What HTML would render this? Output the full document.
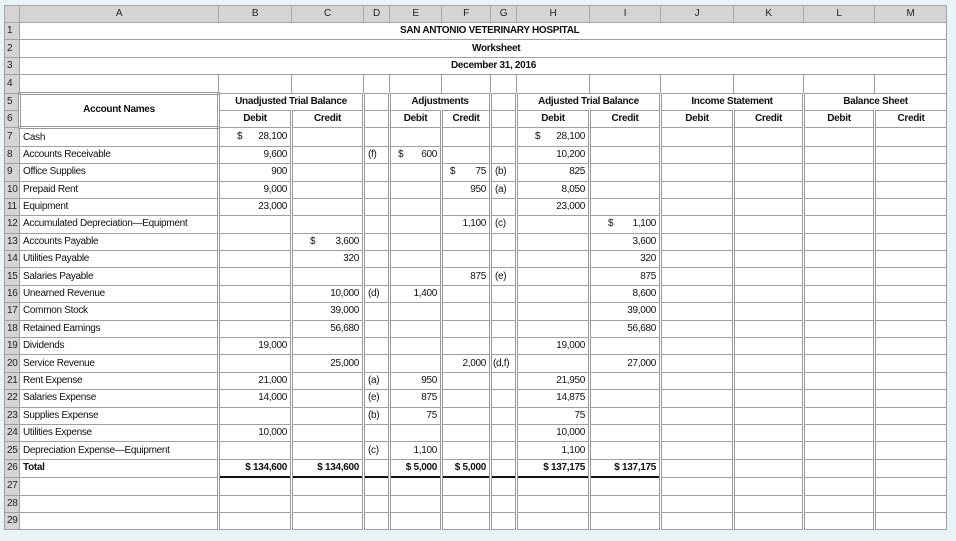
<!DOCTYPE html>
<html><head><style>
body{margin:0;background:#e8f4f5;width:956px;height:541px;overflow:hidden;font-family:"Liberation Sans",sans-serif;}
table{position:absolute;left:4px;top:5px;border-collapse:collapse;table-layout:fixed;background:#fff;font-size:10px;letter-spacing:-0.3px;color:#111}
td{border:1px solid #a0a0a0;height:16.4px;padding:0 3px;white-space:nowrap;overflow:hidden;line-height:12px}
tr.h td{background:#d4d4d4;text-align:center;color:#222;height:16px;border-color:#a8a8a8}
td.rh{background:#d4d4d4;padding:0 0 0 2px;text-align:left;color:#222}
.r{text-align:right}.c{text-align:center}.b{font-weight:bold}
.s{float:left;margin-left:14px}
.s2{float:left;margin-left:4px}
tr.d td.x{border-left:3px double #999}
.tot td.t{border-bottom:2px solid #111}
</style></head><body>
<table>
<colgroup><col style="width:15px"><col style="width:199px"><col style="width:73px"><col style="width:72px"><col style="width:26px"><col style="width:52px"><col style="width:49px"><col style="width:26px"><col style="width:73px"><col style="width:71px"><col style="width:73px"><col style="width:70px"><col style="width:71px"><col style="width:72px"></colgroup>
<tr class="h"><td></td><td>A</td><td>B</td><td>C</td><td>D</td><td>E</td><td>F</td><td>G</td><td>H</td><td>I</td><td>J</td><td>K</td><td>L</td><td>M</td></tr>
<tr><td class="rh">1</td><td colspan="13" style="text-align:left;padding-left:380px" class="b">SAN ANTONIO VETERINARY HOSPITAL</td></tr>
<tr><td class="rh">2</td><td colspan="13" style="text-align:left;padding-left:452px" class="b">Worksheet</td></tr>
<tr><td class="rh">3</td><td colspan="13" style="text-align:left;padding-left:431px" class="b">December 31, 2016</td></tr>
<tr><td class="rh">4</td><td></td><td></td><td></td><td></td><td></td><td></td><td></td><td></td><td></td><td></td><td></td><td></td><td></td></tr>
<tr class="d b"><td class="rh" style="font-weight:normal">5</td><td rowspan="2" class="c" style="border:3px double #999">Account Names</td><td colspan="2" class="c x">Unadjusted Trial Balance</td><td class="x"></td><td colspan="2" class="c x">Adjustments</td><td class="x"></td><td colspan="2" class="c x">Adjusted Trial Balance</td><td colspan="2" class="c x">Income Statement</td><td colspan="2" class="c x">Balance Sheet</td></tr>
<tr class="d b"><td class="rh" style="font-weight:normal">6</td><td class="c x">Debit</td><td class="c x">Credit</td><td class="x"></td><td class="c x">Debit</td><td class="c x">Credit</td><td class="x"></td><td class="c x">Debit</td><td class="c x">Credit</td><td class="c x">Debit</td><td class="c x">Credit</td><td class="c x">Debit</td><td class="c x">Credit</td></tr>
<tr class="d"><td class="rh">7</td><td>Cash</td><td class="r x"><span class="s">$</span>28,100</td><td class="x"></td><td class="x"></td><td class="x"></td><td class="x"></td><td class="x"></td><td class="r x"><span class="s">$</span>28,100</td><td class="x"></td><td class="x"></td><td class="x"></td><td class="x"></td><td class="x"></td></tr>
<tr class="d"><td class="rh">8</td><td>Accounts Receivable</td><td class="r x">9,600</td><td class="x"></td><td class="x">(f)</td><td class="r x"><span class="s2">$</span>600</td><td class="x"></td><td class="x"></td><td class="r x">10,200</td><td class="x"></td><td class="x"></td><td class="x"></td><td class="x"></td><td class="x"></td></tr>
<tr class="d"><td class="rh">9</td><td>Office Supplies</td><td class="r x">900</td><td class="x"></td><td class="x"></td><td class="x"></td><td class="r x"><span class="s2">$</span>75</td><td class="x">(b)</td><td class="r x">825</td><td class="x"></td><td class="x"></td><td class="x"></td><td class="x"></td><td class="x"></td></tr>
<tr class="d"><td class="rh">10</td><td>Prepaid Rent</td><td class="r x">9,000</td><td class="x"></td><td class="x"></td><td class="x"></td><td class="r x">950</td><td class="x">(a)</td><td class="r x">8,050</td><td class="x"></td><td class="x"></td><td class="x"></td><td class="x"></td><td class="x"></td></tr>
<tr class="d"><td class="rh">11</td><td>Equipment</td><td class="r x">23,000</td><td class="x"></td><td class="x"></td><td class="x"></td><td class="x"></td><td class="x"></td><td class="r x">23,000</td><td class="x"></td><td class="x"></td><td class="x"></td><td class="x"></td><td class="x"></td></tr>
<tr class="d"><td class="rh">12</td><td>Accumulated Depreciation—Equipment</td><td class="x"></td><td class="x"></td><td class="x"></td><td class="x"></td><td class="r x">1,100</td><td class="x">(c)</td><td class="x"></td><td class="r x"><span class="s">$</span>1,100</td><td class="x"></td><td class="x"></td><td class="x"></td><td class="x"></td></tr>
<tr class="d"><td class="rh">13</td><td>Accounts Payable</td><td class="x"></td><td class="r x"><span class="s">$</span>3,600</td><td class="x"></td><td class="x"></td><td class="x"></td><td class="x"></td><td class="x"></td><td class="r x">3,600</td><td class="x"></td><td class="x"></td><td class="x"></td><td class="x"></td></tr>
<tr class="d"><td class="rh">14</td><td>Utilities Payable</td><td class="x"></td><td class="r x">320</td><td class="x"></td><td class="x"></td><td class="x"></td><td class="x"></td><td class="x"></td><td class="r x">320</td><td class="x"></td><td class="x"></td><td class="x"></td><td class="x"></td></tr>
<tr class="d"><td class="rh">15</td><td>Salaries Payable</td><td class="x"></td><td class="x"></td><td class="x"></td><td class="x"></td><td class="r x">875</td><td class="x">(e)</td><td class="x"></td><td class="r x">875</td><td class="x"></td><td class="x"></td><td class="x"></td><td class="x"></td></tr>
<tr class="d"><td class="rh">16</td><td>Unearned Revenue</td><td class="x"></td><td class="r x">10,000</td><td class="x">(d)</td><td class="r x">1,400</td><td class="x"></td><td class="x"></td><td class="x"></td><td class="r x">8,600</td><td class="x"></td><td class="x"></td><td class="x"></td><td class="x"></td></tr>
<tr class="d"><td class="rh">17</td><td>Common Stock</td><td class="x"></td><td class="r x">39,000</td><td class="x"></td><td class="x"></td><td class="x"></td><td class="x"></td><td class="x"></td><td class="r x">39,000</td><td class="x"></td><td class="x"></td><td class="x"></td><td class="x"></td></tr>
<tr class="d"><td class="rh">18</td><td>Retained Earnings</td><td class="x"></td><td class="r x">56,680</td><td class="x"></td><td class="x"></td><td class="x"></td><td class="x"></td><td class="x"></td><td class="r x">56,680</td><td class="x"></td><td class="x"></td><td class="x"></td><td class="x"></td></tr>
<tr class="d"><td class="rh">19</td><td>Dividends</td><td class="r x">19,000</td><td class="x"></td><td class="x"></td><td class="x"></td><td class="x"></td><td class="x"></td><td class="r x">19,000</td><td class="x"></td><td class="x"></td><td class="x"></td><td class="x"></td><td class="x"></td></tr>
<tr class="d"><td class="rh">20</td><td>Service Revenue</td><td class="x"></td><td class="r x">25,000</td><td class="x"></td><td class="x"></td><td class="r x">2,000</td><td class="x" style="padding:0 1px">(d,f)</td><td class="x"></td><td class="r x">27,000</td><td class="x"></td><td class="x"></td><td class="x"></td><td class="x"></td></tr>
<tr class="d"><td class="rh">21</td><td>Rent Expense</td><td class="r x">21,000</td><td class="x"></td><td class="x">(a)</td><td class="r x">950</td><td class="x"></td><td class="x"></td><td class="r x">21,950</td><td class="x"></td><td class="x"></td><td class="x"></td><td class="x"></td><td class="x"></td></tr>
<tr class="d"><td class="rh">22</td><td>Salaries Expense</td><td class="r x">14,000</td><td class="x"></td><td class="x">(e)</td><td class="r x">875</td><td class="x"></td><td class="x"></td><td class="r x">14,875</td><td class="x"></td><td class="x"></td><td class="x"></td><td class="x"></td><td class="x"></td></tr>
<tr class="d"><td class="rh">23</td><td>Supplies Expense</td><td class="x"></td><td class="x"></td><td class="x">(b)</td><td class="r x">75</td><td class="x"></td><td class="x"></td><td class="r x">75</td><td class="x"></td><td class="x"></td><td class="x"></td><td class="x"></td><td class="x"></td></tr>
<tr class="d"><td class="rh">24</td><td>Utilities Expense</td><td class="r x">10,000</td><td class="x"></td><td class="x"></td><td class="x"></td><td class="x"></td><td class="x"></td><td class="r x">10,000</td><td class="x"></td><td class="x"></td><td class="x"></td><td class="x"></td><td class="x"></td></tr>
<tr class="d"><td class="rh">25</td><td>Depreciation Expense—Equipment</td><td class="x"></td><td class="x"></td><td class="x">(c)</td><td class="r x">1,100</td><td class="x"></td><td class="x"></td><td class="r x">1,100</td><td class="x"></td><td class="x"></td><td class="x"></td><td class="x"></td><td class="x"></td></tr>
<tr class="d tot b"><td class="rh" style="font-weight:normal">26</td><td>Total</td><td class="r x t">$ 134,600</td><td class="r x t">$ 134,600</td><td class="x t"></td><td class="r x t">$ 5,000</td><td class="r x t">$ 5,000</td><td class="x t"></td><td class="r x t">$ 137,175</td><td class="r x t">$ 137,175</td><td class="x"></td><td class="x"></td><td class="x"></td><td class="x"></td></tr>
<tr class="d"><td class="rh">27</td><td></td><td class="x"></td><td class="x"></td><td class="x"></td><td class="x"></td><td class="x"></td><td class="x"></td><td class="x"></td><td class="x"></td><td class="x"></td><td class="x"></td><td class="x"></td><td class="x"></td></tr>
<tr class="d"><td class="rh">28</td><td></td><td class="x"></td><td class="x"></td><td class="x"></td><td class="x"></td><td class="x"></td><td class="x"></td><td class="x"></td><td class="x"></td><td class="x"></td><td class="x"></td><td class="x"></td><td class="x"></td></tr>
<tr class="d"><td class="rh">29</td><td></td><td class="x"></td><td class="x"></td><td class="x"></td><td class="x"></td><td class="x"></td><td class="x"></td><td class="x"></td><td class="x"></td><td class="x"></td><td class="x"></td><td class="x"></td><td class="x"></td></tr>
</table>
</body></html>
